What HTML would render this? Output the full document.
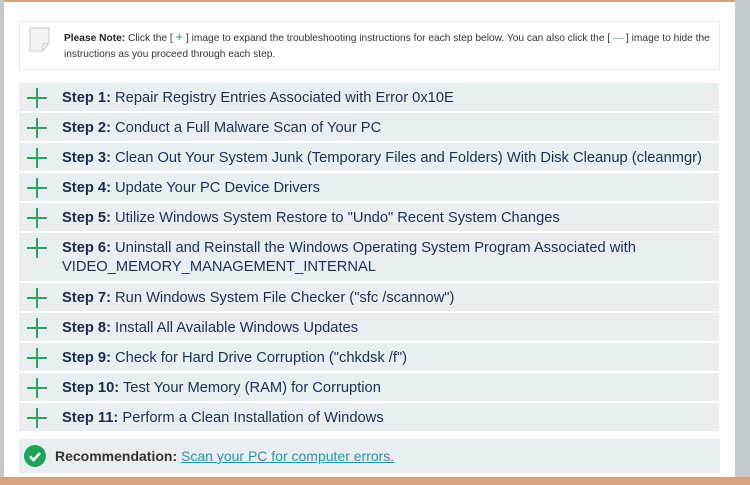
<!DOCTYPE html>
<html><head><style>
*{margin:0;padding:0;box-sizing:border-box}
body{width:750px;height:485px;position:relative;background:#fff;font-family:"Liberation Sans",sans-serif;overflow:hidden}
.lg{position:absolute;left:0;top:0;width:4px;height:485px;background:#c3c9cd}
.rg{position:absolute;left:735px;top:0;width:15px;height:485px;background:#c3c9cd}
.top{position:absolute;left:0;top:0;width:750px;height:2px;background:#d9a27e}
.bot{position:absolute;left:0;top:477px;width:750px;height:8px;background:#d9a27e}
.note{position:absolute;left:19px;top:21px;width:701px;height:49px;border:1px solid #e6e9ea;background:#fff}
.note p{position:absolute;left:44px;top:7px;font-size:10.2px;line-height:16px;color:#333;width:652px}
.row{position:absolute;left:19px;width:700px;background:#e9eef0}
.row .pl{position:absolute;left:8px;top:5px;width:20px;height:20px}
.row .pl:before{content:"";position:absolute;left:9px;top:0;width:2px;height:20px;background:#2aa35b}
.row .pl:after{content:"";position:absolute;left:0;top:9px;width:20px;height:2px;background:#2aa35b}
.row span{position:absolute;left:43px;top:6px;font-size:14.7px;line-height:19px;color:#1d2f55}
b{color:#1b2a4c}
.rec{position:absolute;left:19px;top:439px;width:701px;height:34px;background:#e9eef0}
</style></head><body>
<div class="top"></div><div class="lg"></div><div class="rg"></div><div class="bot"></div>
<div class="note">
<svg style="position:absolute;left:9px;top:5px" width="22" height="25"><path d="M1 1H20V16L14 24H1Z" fill="#f4f4f4" stroke="#ccc"/><path d="M20 16L14 17L14 24" fill="none" stroke="#ccc"/></svg>
<p><b style="color:#222">Please Note:</b> Click the [ <span style="color:#2aa35b;font-size:13px">+</span> ] image to expand the troubleshooting instructions for each step below. You can also click the [ <span style="color:#3a9ac8">—</span> ] image to hide the instructions as you proceed through each step.</p>
</div>
<div class="row" style="top:83px;height:28px"><i class="pl"></i><span><b>Step 1:</b> Repair Registry Entries Associated with Error 0x10E</span></div>
<div class="row" style="top:113px;height:28px"><i class="pl"></i><span><b>Step 2:</b> Conduct a Full Malware Scan of Your PC</span></div>
<div class="row" style="top:143px;height:28px"><i class="pl"></i><span><b>Step 3:</b> Clean Out Your System Junk (Temporary Files and Folders) With Disk Cleanup (cleanmgr)</span></div>
<div class="row" style="top:173px;height:28px"><i class="pl"></i><span><b>Step 4:</b> Update Your PC Device Drivers</span></div>
<div class="row" style="top:203px;height:28px"><i class="pl"></i><span><b>Step 5:</b> Utilize Windows System Restore to "Undo" Recent System Changes</span></div>
<div class="row" style="top:233px;height:48px"><i class="pl"></i><span style="width:645px"><b>Step 6:</b> Uninstall and Reinstall the Windows Operating System Program Associated with VIDEO_MEMORY_MANAGEMENT_INTERNAL</span></div>
<div class="row" style="top:283px;height:28px"><i class="pl"></i><span><b>Step 7:</b> Run Windows System File Checker ("sfc /scannow")</span></div>
<div class="row" style="top:313px;height:28px"><i class="pl"></i><span><b>Step 8:</b> Install All Available Windows Updates</span></div>
<div class="row" style="top:343px;height:28px"><i class="pl"></i><span><b>Step 9:</b> Check for Hard Drive Corruption ("chkdsk /f")</span></div>
<div class="row" style="top:373px;height:28px"><i class="pl"></i><span><b>Step 10:</b> Test Your Memory (RAM) for Corruption</span></div>
<div class="row" style="top:403px;height:28px"><i class="pl"></i><span><b>Step 11:</b> Perform a Clean Installation of Windows</span></div>
<div class="rec">
<svg style="position:absolute;left:5px;top:6px" width="22" height="22"><circle cx="11" cy="11" r="11" fill="#1fa35a"/><path d="M6 11.5L9.5 15L16 8" fill="none" stroke="#fff" stroke-width="2.6"/></svg>
<span style="position:absolute;left:36px;top:9px;font-size:14px;color:#333"><b style="color:#333">Recommendation:</b> <u style="color:#2d8fc0">Scan your PC for computer errors.</u></span>
</div>
</body></html>
